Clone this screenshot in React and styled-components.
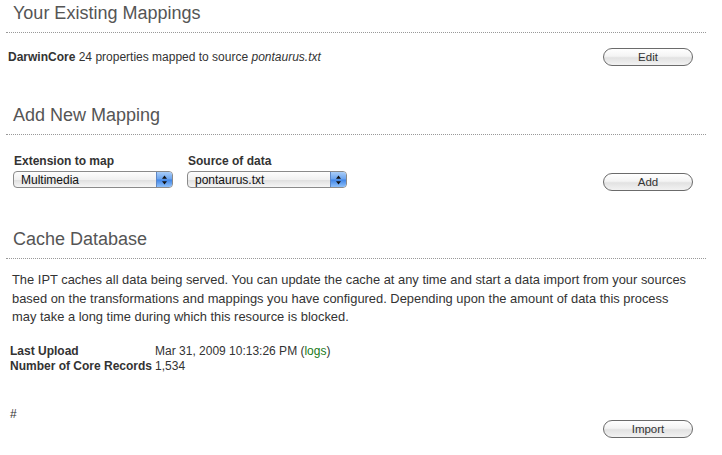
import React from 'react'
import styled, { createGlobalStyle } from 'styled-components'

const GlobalStyle = createGlobalStyle`
  body {
    margin: 0;
    background: #fff;
    font-family: "Liberation Sans", Arial, sans-serif;
    color: #333;
  }
`

const Page = styled.div`
  width: 700px;
  padding-left: 6px;
`

const Section = styled.div`
  margin-top: ${props => props.top || 0}px;
`

const Heading = styled.h2`
  margin: 0;
  padding: 2px 7px 8px;
  font-size: 18px;
  line-height: 22px;
  font-weight: normal;
  color: #555;
  border-bottom: 1px dotted #999;
`

const Row = styled.div`
  display: flex;
  align-items: ${props => props.align || 'center'};
  justify-content: space-between;
  padding: ${props => props.pad || '15px 13px 0 2px'};
  font-size: 12px;
`

const Button = styled.button`
  width: 90px;
  height: 18px;
  padding: 0;
  border: 1px solid #6b6b6b;
  border-radius: 9px;
  background: linear-gradient(#fff 0%, #f4f4f4 45%, #e2e2e2 55%, #f2f2f2 100%);
  font-family: "Liberation Sans", Arial, sans-serif;
  font-size: 11.5px;
  color: #333;
  flex-shrink: 0;
`

const Fields = styled.div`
  display: flex;
  gap: 14px;
`

const Field = styled.div`
  display: flex;
  flex-direction: column;
  gap: 3px;
`

const Label = styled.label`
  font-weight: bold;
  font-size: 12px;
  line-height: 14px;
  padding-left: 1px;
`

const SelectBox = styled.div`
  display: flex;
  width: 160px;
  height: 17px;
  box-sizing: border-box;
  border: 1px solid #8a8a8a;
  border-radius: 4px;
  overflow: hidden;
  background: linear-gradient(#fdfdfd 0%, #f0f0f0 50%, #e0e0e0 55%, #f6f6f6 100%);
`

const Select = styled.select`
  appearance: none;
  flex: 1;
  min-width: 0;
  border: 0;
  background: transparent;
  padding: 0 0 0 7px;
  font-family: "Liberation Sans", Arial, sans-serif;
  font-size: 12px;
  color: #111;
  outline: none;
`

const Stepper = styled.span`
  width: 15px;
  display: flex;
  align-items: center;
  justify-content: center;
  border-left: 1px solid #5d86c5;
  background: linear-gradient(#a9cdf8 0%, #6aa3ee 48%, #3f84e6 52%, #8ec0fa 100%);
`

const Text = styled.p`
  margin: 0;
  padding: 12px 0 0 6px;
  font-size: 12.9px;
  line-height: 18.5px;
`

const Stats = styled.table`
  margin: 17px 0 0 4px;
  border-collapse: collapse;
  font-size: 12px;
  td {
    padding: 0;
    line-height: 15px;
  }
  th {
    padding: 0 3px 0 0;
    text-align: left;
    line-height: 15px;
  }
`

const Logs = styled.a`
  color: #1a7a1a;
  text-decoration: none;
`

const Hash = styled.div`
  padding: 0 0 0 2px;
  font-size: 12px;
`

const Arrows = () => (
  <svg width="7" height="10" viewBox="0 0 7 10">
    <path d="M3.5 0.5 L6 3.8 L1 3.8 Z" fill="#111" />
    <path d="M3.5 9.5 L6 6.2 L1 6.2 Z" fill="#111" />
  </svg>
)

const Dropdown = ({ value }) => (
  <SelectBox>
    <Select defaultValue={value}>
      <option>{value}</option>
    </Select>
    <Stepper><Arrows /></Stepper>
  </SelectBox>
)

export default function App() {
  return (
    <Page>
      <GlobalStyle />

      <Section>
        <Heading>Your Existing Mappings</Heading>
        <Row>
          <span><b>DarwinCore</b> 24 properties mapped to source <i>pontaurus.txt</i></span>
          <Button>Edit</Button>
        </Row>
      </Section>

      <Section top={36}>
        <Heading>Add New Mapping</Heading>
        <Row align="flex-end" pad="19px 13px 0 7px">
          <Fields>
            <Field>
              <Label>Extension to map</Label>
              <Dropdown value="Multimedia" />
            </Field>
            <Field>
              <Label>Source of data</Label>
              <Dropdown value="pontaurus.txt" />
            </Field>
          </Fields>
          <Button style={{ marginBottom: -3 }}>Add</Button>
        </Row>
      </Section>

      <Section top={38}>
        <Heading>Cache Database</Heading>
        <Text>
          The IPT caches all data being served. You can update the cache at any time and start a data import from your sources
          <br />
          based on the transformations and mappings you have configured. Depending upon the amount of data this process
          <br />
          may take a long time during which this resource is blocked.
        </Text>
        <Stats>
          <tbody>
            <tr>
              <th>Last Upload</th>
              <td>Mar 31, 2009 10:13:26 PM (<Logs href="#">logs</Logs>)</td>
            </tr>
            <tr>
              <th>Number of Core Records</th>
              <td>1,534</td>
            </tr>
          </tbody>
        </Stats>
        <Row align="flex-start" pad="33px 13px 0 2px">
          <Hash>#</Hash>
          <Button style={{ marginTop: 13 }}>Import</Button>
        </Row>
      </Section>
    </Page>
  )
}
